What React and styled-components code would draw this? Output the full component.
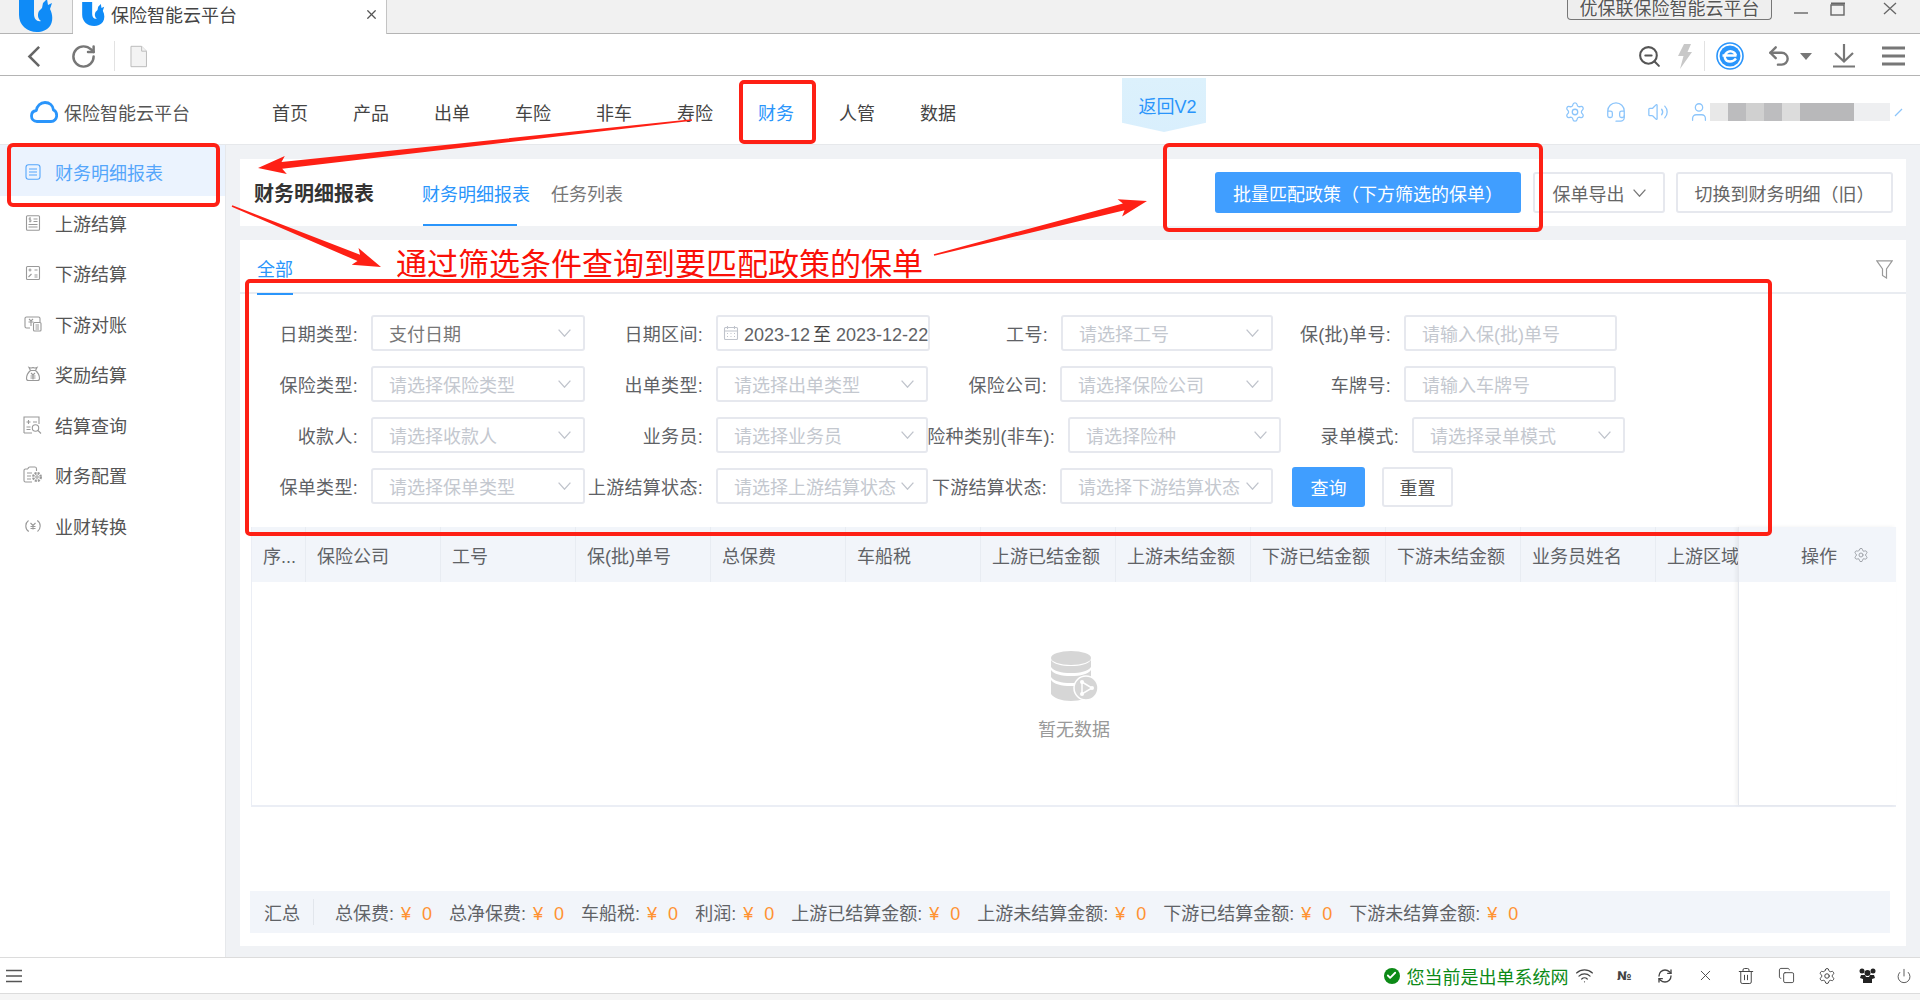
import React from 'react';
import styled, { createGlobalStyle } from 'styled-components';
import { Settings, Headset, Volume2, User, RotateCw, ZoomOut, Undo2, Wifi, RefreshCw, X, Trash2, Copy, Power, Check } from 'lucide-react';

const Global = createGlobalStyle`
  html, body { margin: 0; padding: 0; background: #fff; }
  body { font-family: "Liberation Sans", "Noto Sans CJK SC", sans-serif; font-size: 18px; color: #606266; }
  * { box-sizing: border-box; }
`;

const Root = styled.div`
  position: relative; width: 1920px; height: 1000px; overflow: hidden;
  display: flex; flex-direction: column; background: #f5f5f5;
`;

/* ---------- browser chrome ---------- */
const TitleBar = styled.div`
  height: 34px; flex: none; display: flex; align-items: flex-start;
  background: #f1f1f1; border-bottom: 1px solid #b4b4b4;
`;
const HomeTab = styled.div`
  width: 73px; height: 33px; border-right: 1px solid #c4c4c4; overflow: hidden;
  display: flex; justify-content: center;
`;
const ActiveTab = styled.div`
  width: 314px; height: 34px; background: #fff; border-right: 1px solid #c4c4c4;
  display: flex; align-items: center; padding: 0 7px 6px 9px; gap: 6px; color: #444;
`;
const TabTitle = styled.span`flex: 1; white-space: nowrap;`;
const WindowArea = styled.div`margin-left: auto; display: flex; align-items: flex-start; padding-right: 23px;`;
const BrandButton = styled.div`
  height: 21px; width: 205px; margin-top: -1px; background: #eee; border: 1px solid #777; border-top: none;
  border-radius: 0 0 4px 4px; display: flex; align-items: center; justify-content: center;
  color: #555; line-height: 18px; text-shadow: 0 0 2px #fff; white-space: nowrap;
`;
const WindowIcons = styled.div`display: flex; gap: 22px; margin-left: 22px; margin-top: 2px; svg:last-child { margin-left: 15px; }`;

const Toolbar = styled.div`
  height: 42px; flex: none; background: #fff; border-bottom: 1px solid #b4b4b4;
  display: flex; align-items: center; padding: 3px 15px 0 27px;
`;
const ToolGroup = styled.div`display: flex; align-items: center; gap: ${p => p.$gap || 0}px; margin-left: ${p => p.$ml || 0}px;`;
const ToolSep = styled.div`width: 1px; height: 30px; background: #e2e2e2; margin: 0 ${p => p.$r || 15}px 0 ${p => p.$l || 15}px;`;

/* ---------- app header ---------- */
const Header = styled.div`
  height: 69px; flex: none; background: #fff; border-bottom: 1px solid #e6e8eb;
  display: flex; align-items: center; padding: 4px 17px 0 30px;
`;
const Brand = styled.div`display: flex; align-items: center; gap: 6px; color: #555; width: 160px; white-space: nowrap;`;
const Nav = styled.nav`display: flex; gap: 45px; margin-left: 82px;`;
const NavItem = styled.span`color: ${p => p.$active ? '#2a95fb' : '#444'}; white-space: nowrap;`;
const BackTag = styled.div`
  align-self: flex-start; margin: -2px 0 0 166px; width: 84px; height: 54px; flex: none;
  background: linear-gradient(180deg, #dcf1fc, #d9effd); color: #2a95fb;
  clip-path: polygon(0 0, 100% 0, 100% 83%, 50% 100%, 0 83%);
  display: flex; align-items: center; justify-content: center; padding-left: 7px; white-space: nowrap;
`;
const HeaderRight = styled.div`margin-left: auto; display: flex; align-items: center; color: #8cc5fb;`;
const HeaderIcons = styled.div`display: flex; align-items: center; gap: 19.5px;`;
const BlurBlock = styled.div`display: flex; height: 18px; margin-right: 4px;`;
const BlurCell = styled.span`display: block; height: 18px; width: ${p => p.$w}px; background: ${p => p.$c};`;

/* ---------- body ---------- */
const Body = styled.div`flex: 1; display: flex; min-height: 0;`;
const Sidebar = styled.aside`width: 226px; flex: none; background: #fff; border-right: 1px solid #e6e8eb;`;
const SideItem = styled.div`
  height: 50.5px; padding: 4px 0 0 24px; display: flex; align-items: center; gap: 14px;
  color: ${p => p.$active ? '#55a6fb' : '#555'};
  background: ${p => p.$active ? '#ebf3fe' : '#fff'};
`;
const SideIcon = styled.span`width: 17px; flex: none; display: flex; justify-content: center;`;
const Main = styled.main`
  flex: 1; min-width: 0; background: #f0f2f5; padding: 14px 14px 11px 14px;
  display: flex; flex-direction: column; gap: 14px;
`;
const TopCard = styled.div`
  height: 67px; flex: none; background: #fff; display: flex; align-items: center; padding: 0 13px 0 14px;
`;
const PageTitle = styled.h1`margin: 0; font-size: 20px; font-weight: 700; color: #333; white-space: nowrap;`;
const PageTabs = styled.div`display: flex; gap: 21px; margin-left: 48px; height: 100%; align-items: center;`;
const PageTab = styled.span`
  position: relative; height: 100%; display: flex; align-items: center; white-space: nowrap;
  color: ${p => p.$active ? '#2a95fb' : '#777'};
  ${p => p.$active ? `&::after { content: ''; position: absolute; left: 1px; bottom: 0; width: 94px; height: 2px; background: #2a95fb; }` : ''}
`;
const TopActions = styled.div`margin-left: auto; display: flex; gap: 11px;`;
const PrimaryButton = styled.button`
  height: 41px; width: ${p => p.$w}px; background: #409eff; border: none; border-radius: 3px; color: #fff;
  font: inherit; padding: 0; white-space: nowrap;
`;
const BatchButton = styled(PrimaryButton)`margin-right: 1px;`;
const PlainButton = styled.button`
  height: 41px; width: ${p => p.$w}px; background: #fff; border: 2px solid #e6e8ee; border-radius: 3px; color: #666;
  font: inherit; padding: 0; white-space: nowrap; display: flex; align-items: center; justify-content: center; gap: 8px;
`;
const Panel = styled.section`flex: 1; min-height: 0; background: #fff; display: flex; flex-direction: column; padding-bottom: 13px;`;
const PanelTabs = styled.div`
  height: 54px; flex: none; border-bottom: 2px solid #e9ecf1; display: flex; align-items: center;
  justify-content: space-between; padding: 4px 13px 0 17px;
`;
const AllTab = styled.span`
  position: relative; color: #2a95fb;
  &::after { content: ''; position: absolute; left: 0; right: 0; bottom: -14px; height: 2px; background: #2a95fb; }
`;
const Filters = styled.div`display: flex; flex-direction: column; gap: 15px; padding: 21px 0 0 10px;`;
const FilterRow = styled.div`display: flex; height: 36px; align-items: flex-start;`;
const FieldLabel = styled.label`
  width: ${p => p.$w}px; flex: none; height: 36px; padding-right: 13px; display: flex; align-items: center;
  justify-content: flex-end; white-space: nowrap; color: #606266; letter-spacing: .3px;
`;
const FieldBox = styled.div`
  width: ${p => p.$w}px; flex: none; height: 36px; border: 2px solid #e6e8ee; border-radius: 3px; background: #fff;
  display: flex; align-items: center; padding: 0 12px 0 16px; white-space: nowrap; overflow: hidden;
  color: ${p => p.$filled ? '#777' : '#c4c8cf'};
`;
const FieldText = styled.span`flex: 1; min-width: 0;`;
const DateBox = styled(FieldBox)`padding: 0 0 0 5px; color: #606266;`;
const DateText = styled.span`margin-left: 5px;`;
const DateTo = styled.span`margin-left: 3px; color: #444;`;
const SearchButton = styled(PrimaryButton)`height: 40px; margin: -1px 0 0 19px;`;
const ResetButton = styled(PlainButton)`height: 40px; margin: -1px 0 0 17px; color: #555;`;

const Table = styled.div`
  position: relative; flex: none; height: 280px; margin: 23px 10px 0 11px; display: flex;
  border-left: 1px solid #ebeef5; border-bottom: 2px solid #ebeef5;
`;
const TableScroll = styled.div`flex: 1; min-width: 0; overflow: hidden;`;
const TableHead = styled.div`height: 55px; display: flex; background: #f2f5fa;`;
const HeadCell = styled.div`
  width: ${p => p.$w}px; flex: none; height: 55px; display: flex; align-items: center; padding-left: 11px;
  border-right: 1px solid #e8ecf2; white-space: nowrap; color: #606266;
`;
const FixedCol = styled.div`
  width: 158px; flex: none; border-left: 1px solid #e4e7ed; box-shadow: -2px 0 4px rgba(0,0,0,.06);
  background: #fff; position: relative;
`;
const FixedHead = styled.div`height: 55px; background: #f2f5fa; display: flex; align-items: center; justify-content: flex-end; gap: 16px; padding-right: 27px; color: #606266;`;
const Empty = styled.div`
  position: absolute; left: 0; right: 0; top: 55px; bottom: 0; display: flex; flex-direction: column;
  align-items: center; justify-content: center; gap: 14px; color: #999; padding-top: 4px;
`;
const Summary = styled.div`
  margin: auto 16px 0 10px; height: 42px; flex: none; background: #f2f5fa; display: flex; align-items: center;
  padding-left: 14px; white-space: nowrap; color: #606266;
`;
const SummaryHead = styled.span`padding-right: 13px; height: 26px; display: flex; align-items: center; border-right: 1px solid #e2e6ec; margin-right: 21px;`;
const SummaryItem = styled.span`margin-right: 17px;`;
const Money = styled.span`color: #ff9232; margin-left: 7px; word-spacing: 6px;`;

/* ---------- status ---------- */
const StatusBar = styled.footer`
  height: 37px; flex: none; background: #fff; border-top: 1px solid #dcdcdc; border-bottom: 1px solid #dcdcdc;
  display: flex; align-items: center; padding-left: 5px;
`;
const StatusRight = styled.div`margin-left: auto; display: flex; align-items: center; color: #444;`;
const OkBadge = styled.span`
  width: 16px; height: 16px; border-radius: 50%; background: #0c8a16; color: #fff;
  display: flex; align-items: center; justify-content: center; margin-right: 7px;
`;
const OkText = styled.span`color: #0c8a16; white-space: nowrap; margin-right: 6px;`;
const StatusCell = styled.div`
  width: ${p => p.$w || 40.5}px; flex: none; display: flex; align-items: center; justify-content: center;
`;
const NumberSign = styled.span`font-family: "DejaVu Sans", sans-serif; font-size: 12px; font-weight: 700; color: #444;`;
const FooterStrip = styled.div`height: 6px; flex: none; background: #f5f5f5;`;

/* ---------- annotation overlay ---------- */
const Overlay = styled.svg`position: absolute; left: 0; top: 0; pointer-events: none;`;
const Annotation = styled.div`
  position: absolute; left: 396px; top: 247px; font-size: 31px; line-height: 36px; color: #fa1008; white-space: nowrap;
`;

/* ---------- drawings ---------- */
const Whale = ({ w, h, style }) => (
  <svg width={w} height={h} viewBox="0 0 34 36" style={style}>
    <path fill="#0f8bf7" d="M0 0h15v18c0 5 3 8 7 7-3-2-4-6-2-10l3-3 1-5 4-4 1 6 4-2-2 6c3 6 3 12 0 17-3 4-8 6-13 6C8 36 0 29 0 19z" />
  </svg>
);
const Cloud = () => (
  <svg width="29" height="22" viewBox="0 0 28 22" fill="none" stroke="#2a95fb" strokeWidth="2.8" strokeLinejoin="round">
    <path d="M7 20.5C3.5 20.5 1.5 18 1.5 15c0-3 2-5.200 4.800-5.500C7 5 10.500 1.500 15 1.500c4.500 0 8 3 8.500 7.500 2 .8 3.200 3 3.200 5.500 0 3.300-2.500 6-5.700 6z" />
  </svg>
);
const Chevron = ({ c = '#c0c4cc', w = 13, h = 8 }) => (
  <svg width={w} height={h} viewBox="0 0 13 8" fill="none" stroke={c} strokeWidth="1.3" style={{ flex: 'none' }}><path d="M.6.6 6.500 7.200 12.400.6" /></svg>
);
const S = ({ children, w = 16, h = 16, vb = '0 0 16 16', c = '#999' }) => (
  <svg width={w} height={h} viewBox={vb} fill="none" stroke={c} strokeWidth="1.1" style={{ flex: 'none' }}>{children}</svg>
);
const sideIcons = {
  list: <S c="#55a6fb"><rect x="1" y=".8" width="14" height="14.400" rx="2.500" /><path d="M4 5h8M4 8h8M4 11h8" /></S>,
  up: <S><rect x="1.500" y=".8" width="13" height="14.400" rx="1" /><path d="M8.500 4h4M8.500 6.500h4M3.500 9.500h9M3.500 12h9" /><path d="M6 3H4.200v1.800H6v1.800H4.200M5 2.400v5" strokeWidth=".8" /></S>,
  down: <S><rect x="1.500" y="1.500" width="13" height="13" rx="1" /><path d="M3.500 5h3M5 3.500v3M9.500 5h3M3.500 12l3-3M9.500 10h3M9.500 12h3" /></S>,
  rec: <S w={18} vb="0 0 18 16"><path d="M6 12H2.500a1.500 1.500 0 0 1-1.500-1.500V2.500A1.500 1.500 0 0 1 2.500 1h12A1.500 1.500 0 0 1 16 2.500V6" /><rect x="9.500" y="6.500" width="7.500" height="8.500" rx="1" /><path d="M11.500 9h3.500M11.500 11h3.500M11.500 13h3.500M5 3l2 2 2-2M4.500 6h5M7 5v5" /></S>,
  gift: <S><path d="M5.500 4.500 4 1.500c1.500.8 2.500.8 4 0 1.500.8 2.500.8 4 0l-1.500 3M5.500 4.500h5c3 2.500 4 5.500 4 8 0 1.500-1 2-2 2h-9c-1 0-2-.5-2-2 0-2.500 1-5.500 4-8z" /><path d="M6 7l2 2 2-2M5.500 10h5M5.500 12h5M8 9v4.500" /></S>,
  query: <S w={19} h={18} vb="0 0 19 18"><path d="M1 17V1h15v7M1 17h8" /><path d="M3.500 6h4M5.500 4v4M10 6h4M3.500 11h4M3.500 13.500h4" /><circle cx="12.500" cy="12" r="3.200" /><path d="M15 14.500l3 3" /></S>,
  conf: <S w={19} h={18} vb="0 0 19 18"><path d="M9 16H2.500A1.500 1.500 0 0 1 1 14.500v-10A1.500 1.500 0 0 1 2.500 3H5M5 3c0-1 1-2 2-2h5c1 0 1.500 1 1.500 2v2" /><path d="M4 7h5M4 10h4M4 13h4" /><circle cx="14" cy="11" r="3.800" strokeWidth="2.400" strokeDasharray="2 1" /><circle cx="14" cy="11" r="1.200" /></S>,
  swap: <S><path d="M3.500 2.500C1.500 4 .8 6 .8 8c0 2.500 1.200 4.500 3 5.500M12.500 13.500c2-1.500 2.700-3.500 2.700-5.500 0-2.500-1.200-4.500-3-5.500" /><path d="M5.500 5 8 7.500 10.500 5M5.500 8.500h5M5.500 10.500h5M8 7.500v4" /></S>,
};

const arrow = (x1, y1, x2, y2, tail = 0.8, shaft = 3, head = 10, len = 24) => {
  const L = Math.hypot(x2 - x1, y2 - y1), ux = (x2 - x1) / L, uy = (y2 - y1) / L, nx = -uy, ny = ux;
  const p = (d, o) => `${(x1 + ux * d + nx * o).toFixed(1)},${(y1 + uy * d + ny * o).toFixed(1)}`;
  return [p(0, tail), p(L - len + 4, shaft), p(L - len, head), p(L, 0), p(L - len, -head), p(L - len + 4, -shaft), p(0, -tail)].join(' ');
};

const nav = ['首页', '产品', '出单', '车险', '非车', '寿险', '财务', '人管', '数据'];
const side = [
  ['财务明细报表', 'list'], ['上游结算', 'up'], ['下游结算', 'down'], ['下游对账', 'rec'],
  ['奖励结算', 'gift'], ['结算查询', 'query'], ['财务配置', 'conf'], ['业财转换', 'swap'],
];
const blur = [[18, '#e8e8e8'], [18, '#bcbcbe'], [18, '#d0d0d0'], [18, '#bdbdbf'], [18, '#dcdcdc'], [54, '#b8b8ba'], [36, '#eeeff1']];
const rows = [
  [['日期类型:', 121, 214, '支付日期', 's', 1], ['日期区间:', 131, 214, '', 'd'], ['工号:', 131, 212, '请选择工号', 's'], ['保(批)单号:', 131, 213, '请输入保(批)单号', 'i']],
  [['保险类型:', 121, 214, '请选择保险类型', 's'], ['出单类型:', 131, 212, '请选择出单类型', 's'], ['保险公司:', 132, 213, '请选择保险公司', 's'], ['车牌号:', 131, 212, '请输入车牌号', 'i']],
  [['收款人:', 121, 214, '请选择收款人', 's'], ['业务员:', 131, 212, '请选择业务员', 's'], ['险种类别(非车):', 140, 213, '请选择险种', 's'], ['录单模式:', 131, 213, '请选择录单模式', 's']],
  [['保单类型:', 121, 214, '请选择保单类型', 's'], ['上游结算状态:', 131, 212, '请选择上游结算状态', 's'], ['下游结算状态:', 132, 213, '请选择下游结算状态', 's']],
];
const cols = [['序...', 54], ['保险公司', 135], ['工号', 135], ['保(批)单号', 135], ['总保费', 135], ['车船税', 135], ['上游已结金额', 135], ['上游未结金额', 135], ['下游已结金额', 135], ['下游未结金额', 135], ['业务员姓名', 135], ['上游区域', 135]];
const totals = ['总保费', '总净保费', '车船税', '利润', '上游已结算金额', '上游未结算金额', '下游已结算金额', '下游未结算金额'];

const Field = ({ f }) => {
  const [label, lw, iw, text, type, filled] = f;
  return (
    <>
      <FieldLabel $w={lw}>{label}</FieldLabel>
      {type === 'd' ? (
        <DateBox $w={iw}>
          <S c="#c0c4cc"><rect x="1.500" y="2.500" width="13" height="12" rx="1" /><path d="M1.500 6h13M4.500 1v3M11.500 1v3M4 8.500h1M7.500 8.500h1M11 8.500h1M4 11.500h1M7.500 11.500h1M11 11.500h1" /></S>
          <DateText>2023-12<DateTo>至</DateTo> 2023-12-22</DateText>
        </DateBox>
      ) : (
        <FieldBox $w={iw} $filled={filled}>
          <FieldText>{text}</FieldText>
          {type === 's' && <Chevron />}
        </FieldBox>
      )}
    </>
  );
};

export default function App() {
  return (
    <Root>
      <Global />
      <TitleBar>
        <HomeTab><Whale w={34} h={36} style={{ marginTop: -4 }} /></HomeTab>
        <ActiveTab>
          <Whale w={23} h={24} />
          <TabTitle>保险智能云平台</TabTitle>
          <X size={15} color="#555" strokeWidth={2} />
        </ActiveTab>
        <WindowArea>
          <BrandButton>优保联保险智能云平台</BrandButton>
          <WindowIcons>
            <svg width="14" height="16" viewBox="0 0 14 16" stroke="#666" strokeWidth="1.4"><path d="M0 11h14" /></svg>
            <svg width="16" height="14" viewBox="0 0 16 14" fill="none" stroke="#666" strokeWidth="1.4"><rect x="1" y="3" width="13" height="10" /><path d="M1 1.500h14" strokeWidth="2" /></svg>
            <svg width="14" height="13" viewBox="0 0 14 13" fill="none" stroke="#666" strokeWidth="1.3"><path d="M1 1l12 11M13 1 1 12" /></svg>
          </WindowIcons>
        </WindowArea>
      </TitleBar>

      <Toolbar>
        <svg width="14" height="23" viewBox="0 0 14 23" fill="none" stroke="#666" strokeWidth="2.6"><path d="M12.500 1.500 2.500 11.500l10 10" /></svg>
        <ToolGroup $ml={29}><RotateCw size={27} color="#777" strokeWidth={2.2} /></ToolGroup>
        <ToolSep $l={17} $r={15} />
        <svg width="18" height="23" viewBox="0 0 18 23" fill="#f3f3f3" stroke="#bbb"><path d="M1 1h11l5 5v16H1z" /><path d="M12 1v5h5" /></svg>
        <ToolGroup $ml={1490}>
          <ZoomOut size={25} color="#555" strokeWidth={2} />
          <svg style={{ marginLeft: 15 }} width="15" height="25" viewBox="0 0 15 25" fill="#c8c8c8"><path d="M7 0h7l-3.500 8H15L3 25l3.500-13H1z" /></svg>
          <ToolSep $l={12} $r={11} />
          <svg width="28" height="28" viewBox="0 0 28 28" fill="none">
            <circle cx="14" cy="14" r="13" stroke="#2a95fb" strokeWidth="1.600" />
            <circle cx="14" cy="14" r="10.500" fill="#2a95fb" />
            <path d="M6.500 13.500h14M20 13.500C19 9.500 14 8 11 10.500c-4 3-2.500 9 3 9 2.500 0 4.500-1 6-3" stroke="#fff" strokeWidth="2.400" />
          </svg>
          <Undo2 size={26} color="#777" strokeWidth={2.200} style={{ marginLeft: 22 }} />
          <svg style={{ marginLeft: 8 }} width="12" height="7" viewBox="0 0 12 7" fill="#777"><path d="M0 0h12L6 7z" /></svg>
          <svg style={{ marginLeft: 21 }} width="22" height="24" viewBox="0 0 22 24" fill="none" stroke="#777" strokeWidth="2.200"><path d="M11 0v17M2 9l9 8.500L20 9M0 22.500h22" /></svg>
          <svg style={{ marginLeft: 27 }} width="23" height="20" viewBox="0 0 23 20" fill="none" stroke="#777" strokeWidth="3"><path d="M0 2h23M0 10h23M0 18h23" /></svg>
        </ToolGroup>
      </Toolbar>

      <Header>
        <Brand><Cloud />保险智能云平台</Brand>
        <Nav>{nav.map(n => <NavItem key={n} $active={n === '财务'}>{n}</NavItem>)}</Nav>
        <BackTag>返回V2</BackTag>
        <HeaderRight>
          <HeaderIcons>
            <Settings size={22} strokeWidth={1.400} />
            <Headset size={22} strokeWidth={1.400} />
            <Volume2 size={22} strokeWidth={1.400} />
            <User size={22} strokeWidth={1.400} />
          </HeaderIcons>
          <BlurBlock>{blur.map(([w, c], i) => <BlurCell key={i} $w={w} $c={c} />)}</BlurBlock>
          <svg width="9" height="9" viewBox="0 0 9 9" stroke="#8cc5fb" strokeWidth="1.200"><path d="M1 8l7-7" /></svg>
        </HeaderRight>
      </Header>

      <Body>
        <Sidebar>
          {side.map(([t, ic], i) => (
            <SideItem key={t} $active={i === 0}><SideIcon>{sideIcons[ic]}</SideIcon>{t}</SideItem>
          ))}
        </Sidebar>
        <Main>
          <TopCard>
            <PageTitle>财务明细报表</PageTitle>
            <PageTabs>
              <PageTab $active>财务明细报表</PageTab>
              <PageTab>任务列表</PageTab>
            </PageTabs>
            <TopActions>
              <BatchButton $w={306}>批量匹配政策（下方筛选的保单）</BatchButton>
              <PlainButton $w={132}>保单导出<Chevron c="#777" /></PlainButton>
              <PlainButton $w={217}>切换到财务明细（旧）</PlainButton>
            </TopActions>
          </TopCard>
          <Panel>
            <PanelTabs>
              <AllTab>全部</AllTab>
              <svg style={{ marginTop: 2 }} width="17" height="19" viewBox="0 0 17 19" fill="none" stroke="#999" strokeWidth="1.200"><path d="M.8.8h15.400L10.500 9v9l-4-2.500V9z" /></svg>
            </PanelTabs>
            <Filters>
              {rows.map((r, i) => (
                <FilterRow key={i}>
                  {r.map(f => <Field key={f[0]} f={f} />)}
                  {i === 3 && (
                    <>
                      <SearchButton $w={73}>查询</SearchButton>
                      <ResetButton $w={71}>重置</ResetButton>
                    </>
                  )}
                </FilterRow>
              ))}
            </Filters>
            <Table>
              <TableScroll>
                <TableHead>{cols.map(([c, w]) => <HeadCell key={c} $w={w}>{c}</HeadCell>)}</TableHead>
              </TableScroll>
              <FixedCol>
                <FixedHead>操作<Settings size={16} color="#a0a4aa" strokeWidth={1.500} /></FixedHead>
              </FixedCol>
              <Empty>
                <svg width="47" height="50" viewBox="0 0 47 50">
                  <ellipse cx="20" cy="7" rx="20" ry="7" fill="#d6d6d6" />
                  <path d="M0 9c3 4 10 6 20 6s17-2 20-6v7c-3 4-10 6-20 6S3 20 0 16z" fill="#d6d6d6" />
                  <path d="M0 19c3 4 10 6 20 6s17-2 20-6v7c-3 4-10 6-20 6S3 30 0 26z" fill="#d6d6d6" />
                  <path d="M0 29c3 4 10 6 20 6s17-2 20-6v14c-3 4-10 7-20 7S3 47 0 43z" fill="#d6d6d6" />
                  <circle cx="35" cy="37" r="12" fill="#d6d6d6" stroke="#fff" strokeWidth="1.500" />
                  <path d="M31 31l10 6-10 6z" fill="none" stroke="#fff" strokeWidth="1.500" />
                  <circle cx="31" cy="31" r="2" fill="#fff" /><circle cx="41" cy="37" r="2" fill="#fff" /><circle cx="31" cy="43" r="2" fill="#fff" />
                </svg>
                暂无数据
              </Empty>
            </Table>
            <Summary>
              <SummaryHead>汇总</SummaryHead>
              {totals.map(t => <SummaryItem key={t}>{t}:<Money>¥ 0</Money></SummaryItem>)}
            </Summary>
          </Panel>
        </Main>
      </Body>

      <StatusBar>
        <svg width="18" height="14" viewBox="0 0 18 14" stroke="#555" strokeWidth="1.500"><path d="M1 1.500h16M1 7h16M1 12.500h16" /></svg>
        <StatusRight>
          <OkBadge><Check size={11} strokeWidth={4} /></OkBadge>
          <OkText>您当前是出单系统网</OkText>
          <Wifi size={19} strokeWidth={1.500} />
          <StatusCell $w={10.500} />
          <StatusCell><NumberSign>№</NumberSign></StatusCell>
          <StatusCell><RefreshCw size={16} strokeWidth={2} /></StatusCell>
          <StatusCell><X size={17} strokeWidth={1.300} /></StatusCell>
          <StatusCell><Trash2 size={18} strokeWidth={1.300} /></StatusCell>
          <StatusCell><Copy size={17} strokeWidth={1.300} /></StatusCell>
          <StatusCell><Settings size={18} strokeWidth={1.300} /></StatusCell>
          <StatusCell>
            <svg width="17" height="15" viewBox="0 0 17 15" fill="#222"><circle cx="3" cy="3" r="2.500" /><circle cx="14" cy="3" r="2.500" /><circle cx="8.500" cy="5" r="3" /><path d="M2 7h4l1 2h3l1-2h4l1 3-3 1v4H4v-4l-3-1z" /></svg>
          </StatusCell>
          <StatusCell $w={32.500}><Power size={16} strokeWidth={1.300} /></StatusCell>
        </StatusRight>
      </StatusBar>
      <FooterStrip />

      <Overlay width="1920" height="1000" fill="none">
        <g stroke="#fe2015" strokeWidth="4">
          <rect x="9" y="145" width="209" height="60" rx="4" />
          <rect x="741" y="82" width="73" height="60" rx="3" />
          <rect x="1165" y="145" width="376" height="85" rx="4" />
          <rect x="247" y="281" width="1523" height="253" rx="3" />
        </g>
        <g fill="#fe2015">
          <polygon points={arrow(692, 120, 258, 168, 0.8, 3.5, 9, 28)} />
          <polygon points={arrow(232, 206, 381, 267, 0.8, 3.5, 9, 28)} />
          <polygon points={arrow(934, 255, 1147, 201, 0.8, 3.5, 9, 28)} />
        </g>
      </Overlay>
      <Annotation>通过筛选条件查询到要匹配政策的保单</Annotation>
    </Root>
  );
}
